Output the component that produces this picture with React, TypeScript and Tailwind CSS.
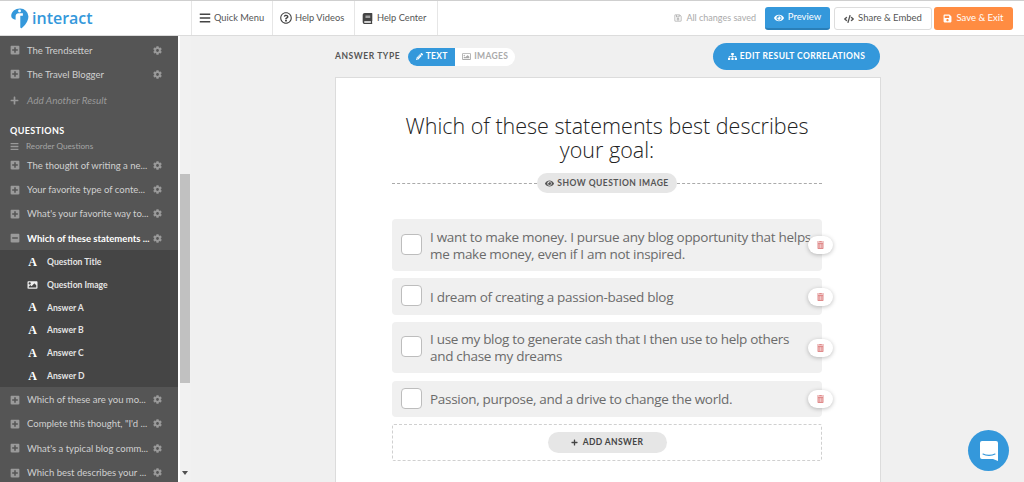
import React from 'react';
import {
  FaBars, FaRegQuestionCircle, FaBook, FaSave, FaRegSave, FaEye, FaCode, FaSitemap, FaPencilAlt,
  FaImage, FaRegImage, FaTrashAlt, FaPlus, FaPlusSquare, FaMinusSquare, FaCog,
} from 'react-icons/fa';

const SANS = "font-['Lato','Liberation_Sans',sans-serif]";
const BODY = "font-['Open_Sans','Noto_Sans',sans-serif]";

const Row: React.FC<{ label: string; active?: boolean }> = ({ label, active }) => (
    <div className="h-[24.33px] flex items-center pl-[10px]">
        {active ? <FaMinusSquare className="w-[10px] h-[10px] text-[#9a9a9a] shrink-0" /> : <FaPlusSquare className="w-[10px] h-[10px] text-[#9a9a9a] shrink-0" />}
        <span className={`ml-[7px] pt-[1px] w-[121px] whitespace-nowrap text-[9.5px] ${active ? 'text-white font-bold' : 'text-[#d0d0d0]'}`}>{label}</span>
        <FaCog className="w-[9px] h-[9px] ml-[5px] text-[#999] shrink-0" />
    </div>
);

const SubRow: React.FC<{ label: string; image?: boolean }> = ({ label, image }) => (
    <div className="h-[22.8px] flex items-center pl-[27px]">
        {image
            ? <FaImage className="w-[11px] h-[10px] text-[#eee]" />
            : <span className="w-[11px] text-center text-[12px] leading-[12px] font-bold text-white font-['Liberation_Serif',serif]">A</span>}
        <span className="ml-[9px] pt-[1px] text-[8.6px] font-bold text-[#e4e4e4]">{label}</span>
    </div>
);

const Sidebar = () => (
    <div className={`w-[178px] shrink-0 bg-[#555555] pt-[2px] ${SANS}`}>
        <Row label="The Trendsetter" />
        <Row label="The Travel Blogger" />
        <div className="h-[24px] mt-[1.5px] flex items-center pl-[10px]">
            <FaPlus className="w-[9px] h-[9px] text-[#999]" />
            <span className="ml-[8px] text-[10px] italic text-[#999]">Add Another Result</span>
        </div>
        <div className="mt-[12px] h-[14px] pl-[10px] flex items-center text-[9px] font-bold tracking-[0.37px] text-white">QUESTIONS</div>
        <div className="mt-[1px] h-[14px] pl-[10px] flex items-center">
            <FaBars className="w-[9px] h-[9px] text-[#999]" />
            <span className="ml-[7px] text-[8.2px] text-[#a5a5a5]">Reorder Questions</span>
        </div>
        <Row label="The thought of writing a ne..." />
        <Row label="Your favorite type of conte..." />
        <Row label="What's your favorite way to..." />
        <Row label="Which of these statements ..." active />
        <div className="bg-[#454545] h-[137px]">
            <SubRow label="Question Title" />
            <SubRow label="Question Image" image />
            <SubRow label="Answer A" />
            <SubRow label="Answer B" />
            <SubRow label="Answer C" />
            <SubRow label="Answer D" />
        </div>
        <Row label="Which of these are you mo..." />
        <Row label="Complete this thought, &quot;I'd ..." />
        <Row label="What's a typical blog comm..." />
        <Row label="Which best describes your ..." />
    </div>
);

const Scrollbar = () => (
    <div className="w-[13px] shrink-0 bg-[#f1f1f1] border-l-2 border-white flex flex-col">
        <div className="mt-[138px] w-[10px] h-[209px] bg-[#c1c1c1]" />
        <svg viewBox="0 0 6 4" className="w-[6px] h-[4px] mt-[88px] ml-[2px]"><path d="M0 0h6L3 4z" fill="#505050" /></svg>
    </div>
);

const Answer: React.FC<{ text: React.ReactNode; h: string; mt: string }> = ({ text, h, mt }) => (
    <div className={`relative ${h} ${mt} rounded-[4px] bg-[#f0f0f0] flex items-center pl-[9px]`}>
        <div className="w-[21px] h-[21px] shrink-0 rounded-[4px] bg-white border border-[#bdbdbd] mb-[2px]" />
        <div className={`ml-[8px] pt-[1px] whitespace-nowrap text-[13.5px] leading-[17px] text-[#6b6b6b] tracking-[-0.3px] ${BODY}`}>{text}</div>
        <div className="absolute right-[-11px] top-1/2 -translate-y-1/2 w-[25px] h-[18px] rounded-full bg-white shadow-[0_1px_4px_rgba(0,0,0,0.25)] flex items-center justify-center">
            <FaTrashAlt className="w-[7px] h-[8px] text-[#e08a8a]" />
        </div>
    </div>
);

export default function App() {
    return (
        <div className={`w-[1024px] h-[482px] overflow-hidden flex flex-col bg-[#f0f0f0] relative ${SANS}`}>
            {/* header */}
            <header className="h-[36px] shrink-0 bg-white border-t border-t-[#cfcfcf] border-b border-b-[#dcdcdc] flex items-stretch">
                <div className="w-[191px] shrink-0 flex items-center pl-[10px]">
                    <svg viewBox="0 0 20 22" className="w-[20px] h-[21px]">
                        <path d="M10 0.5a8.5 8.5 0 0 1 8.8 8.2c0 5.5-4 10-6.8 12.3-1 .6-1.7 0-1.7-1V8.2H13V5.6H8.6c-2.4 0-3.2 1.5-3.2 3.3v3.4C3 12 0.8 10.500 0.800 8.400 0.800 3.800 5 0.500 10 0.500z" fill="#3498db" />
                        <circle cx="9.500" cy="3.200" r="1.500" fill="#ffffff" />
                    </svg>
                    <span className={`ml-[2px] text-[16px] font-semibold text-[#3498db] ${BODY}`}>interact</span>
                </div>
                <div className="border-l border-[#e6e6e6] w-[81px] flex items-center pl-[7px] text-[9.3px] text-[#555]">
                    <FaBars className="w-[12px] h-[12px] text-[#444]" /><span className="ml-[3px]">Quick Menu</span>
                </div>
                <div className="border-l border-[#e6e6e6] w-[82px] flex items-center pl-[7px] text-[9.3px] text-[#555]">
                    <FaRegQuestionCircle className="w-[12px] h-[12px] text-[#444]" /><span className="ml-[3px]">Help Videos</span>
                </div>
                <div className="border-l border-r border-[#e6e6e6] w-[84px] flex items-center pl-[7px] text-[9.3px] text-[#555]">
                    <FaBook className="w-[11px] h-[11px] text-[#444]" /><span className="ml-[4px]">Help Center</span>
                </div>
                <div className="flex-1 flex items-center justify-end pr-[11px]">
                    <FaRegSave className="w-[8px] h-[8px] text-[#aaa]" />
                    <span className="ml-[4px] text-[9px] text-[#aaa]">All changes saved</span>
                    <button className="ml-[9px] w-[65px] h-[23px] mt-[1px] rounded-[3px] bg-[#3498db] border-b-2 border-[#2a7fb8] text-white text-[9.5px] flex items-center justify-center gap-[4px]">
                        <FaEye className="w-[10px] h-[10px]" />Preview
                    </button>
                    <button className="ml-[4px] w-[98px] h-[23px] mt-[1px] rounded-[3px] bg-white border border-[#ddd] text-[#555] text-[9.5px] flex items-center justify-center gap-[4px]">
                        <FaCode className="w-[10px] h-[10px]" />Share &amp; Embed
                    </button>
                    <button className="ml-[2px] w-[79px] h-[23px] mt-[1px] rounded-[3px] bg-[#ff8c42] text-white text-[9.5px] flex items-center justify-center gap-[4px]">
                        <FaSave className="w-[9px] h-[9px]" />Save &amp; Exit
                    </button>
                </div>
            </header>

            <div className="flex-1 flex min-h-0">
                <Sidebar />
                <Scrollbar />
                <main className="flex-1 pl-[144px] min-w-0">
                    <div className="w-[546px] h-[41px] flex items-center">
                        <span className="text-[8.5px] font-bold tracking-[0.57px] text-[#555]">ANSWER TYPE</span>
                        <div className="ml-[8px] h-[18px] flex rounded-full bg-white overflow-hidden">
                            <div className="w-[47px] bg-[#3498db] flex items-center justify-center gap-[3px] text-[8.5px] font-bold tracking-[0.3px] text-white">
                                <FaPencilAlt className="w-[7px] h-[7px]" />TEXT
                            </div>
                            <div className="w-[60px] flex items-center justify-center gap-[3px] text-[8.5px] font-bold tracking-[0.3px] text-[#aaa]">
                                <FaRegImage className="w-[9px] h-[9px]" />IMAGES
                            </div>
                        </div>
                        <button className="ml-auto mr-[1px] w-[167px] h-[27px] rounded-full bg-[#3498db] text-white text-[8.5px] font-bold tracking-[0.38px] flex items-center justify-center gap-[3px]">
                            <FaSitemap className="w-[9px] h-[9px]" />EDIT RESULT CORRELATIONS
                        </button>
                    </div>
                    <section className="w-[546px] h-[420px] bg-white border border-[#dcdcdc] pl-[56px] pr-[58px]">
                        <h1 className={`mt-[36px] text-center text-[21.5px] font-light leading-[24px] text-[#222] ${BODY}`}>
                            Which of these statements best describes<br />your goal:
                        </h1>
                        <div className="mt-[11px] h-[20px] flex items-center">
                            <div className="flex-1 border-t border-dashed border-[#aaa]" />
                            <div className="w-[140px] h-[20px] rounded-full bg-[#e6e6e6] flex items-center justify-center gap-[3px] text-[8.5px] font-bold tracking-[0.49px] text-[#555]">
                                <FaEye className="w-[9px] h-[9px]" />SHOW QUESTION IMAGE
                            </div>
                            <div className="flex-1 border-t border-dashed border-[#aaa]" />
                        </div>
                        <Answer mt="mt-[26px]" h="h-[52px]" text={<>I want to make money. I pursue any blog opportunity that helps<br />me make money, even if I am not inspired.</>} />
                        <Answer mt="mt-[7px]" h="h-[37px]" text="I dream of creating a passion-based blog" />
                        <Answer mt="mt-[7px]" h="h-[51px]" text={<>I use my blog to generate cash that I then use to help others<br />and chase my dreams</>} />
                        <Answer mt="mt-[8px]" h="h-[36px]" text="Passion, purpose, and a drive to change the world." />
                        <div className="mt-[7px] h-[37px] rounded-[2px] border border-dashed border-[#d0d0d0] flex items-center justify-center">
                            <button className="w-[119px] h-[21px] mb-[1px] rounded-full bg-[#e6e6e6] flex items-center justify-center gap-[5px] text-[8.5px] font-bold tracking-[0.35px] text-[#444]">
                                <FaPlus className="w-[7px] h-[7px]" />ADD ANSWER
                            </button>
                        </div>
                    </section>
                </main>
            </div>

            {/* chat launcher */}
            <div className="absolute left-[968px] top-[430px] w-[41px] h-[41px] rounded-full bg-[#3498db] flex items-center justify-center">
                <svg viewBox="0 0 18 20" className="w-[18px] h-[20px]">
                    <path d="M2 0h14a2 2 0 0 1 2 2v18l-5-2H2a2 2 0 0 1-2-2V2a2 2 0 0 1 2-2z" fill="#ffffff" />
                    <path d="M3 13c3 1.800 9 1.800 12 0" fill="none" stroke="#3498db" strokeWidth="1.100" strokeLinecap="round" />
                </svg>
            </div>
        </div>
    );
}
